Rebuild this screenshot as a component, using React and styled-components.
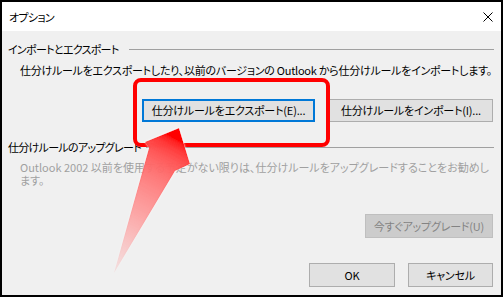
import React from "react";
import styled, { createGlobalStyle } from "styled-components";

const Global = createGlobalStyle`
  html, body { margin: 0; padding: 0; background: #f0f0f0; }
  body {
    font-family: "Noto Sans CJK JP", "Noto Sans", sans-serif;
    font-size: 11px;
    font-feature-settings: "palt";
  }
`;

const Window = styled.div`
  position: relative;
  width: 503px;
  height: 297px;
  box-sizing: border-box;
  border: 2px solid #000;
  display: flex;
  flex-direction: column;
  background: #f0f0f0;
  overflow: hidden;
`;

const TitleBar = styled.div`
  height: 29px;
  flex: none;
  background: #fff;
  display: flex;
  align-items: center;
  justify-content: space-between;
  padding: 0 8px 0 7px;
  color: #000;
`;

const Title = styled.span`
  letter-spacing: -0.7px;
`;

const CloseIcon = styled.svg`
  width: 10px;
  height: 10px;
  display: block;
`;

const Body = styled.div`
  flex: 1;
  display: flex;
  flex-direction: column;
  padding: 0 8px 0 6px;
`;

const GroupHeader = styled.div`
  display: flex;
  align-items: center;
  height: 16px;
  line-height: 16px;
  margin-top: ${(p) => p.$top}px;
  color: #000;
  white-space: nowrap;
`;

const HeaderLabel = styled.span`
  letter-spacing: -0.7px;
`;

const GroupLine = styled.div`
  flex: 1;
  height: 1px;
  background: #a0a0a0;
  margin-left: ${(p) => p.$gap}px;
  margin-right: -1px;
`;

const Description = styled.div`
  margin: 5px 0 0 12px;
  height: 16px;
  line-height: 16px;
  color: #000;
  white-space: nowrap;
  letter-spacing: -0.25px;
`;

const DisabledText = styled.div`
  margin: 6px 0 0 12px;
  color: #a0a0a0;
  white-space: nowrap;
  letter-spacing: 0px;
`;

const DisabledLine = styled.div`
  height: 13px;
  line-height: 13px;
`;

const ButtonRow = styled.div`
  display: flex;
  justify-content: flex-end;
  gap: ${(p) => p.$gap}px;
  margin-top: ${(p) => p.$top}px;
`;

const Button = styled.button`
  font: inherit;
  font-feature-settings: "palt";
  width: ${(p) => p.$w}px;
  height: ${(p) => p.$h}px;
  box-sizing: border-box;
  padding: 0;
  margin: 0;
  background: ${(p) => (p.$disabled ? "#cccccc" : "#e1e1e1")};
  border: ${(p) =>
    p.$focused ? "2px solid #0078d7" : p.$disabled ? "1px solid #bfbfbf" : "1px solid #adadad"};
  color: ${(p) => (p.$disabled ? "#838383" : "#000")};
  font-size: 11px;
  letter-spacing: -0.2px;
  line-height: 1;
  display: flex;
  align-items: center;
  justify-content: center;
  white-space: nowrap;
`;

const Overlay = styled.svg`
  position: absolute;
  left: 0;
  top: 0;
  width: 503px;
  height: 297px;
  pointer-events: none;
`;

export default function App() {
  return (
    <>
      <Global />
      <Window>
        <TitleBar>
          <Title>オプション</Title>
          <CloseIcon viewBox="0 0 10 10">
            <path d="M0.5 0.5 L9.5 9.5 M9.5 0.5 L0.5 9.5" stroke="#000" strokeWidth="1" fill="none" />
          </CloseIcon>
        </TitleBar>
        <Body>
          <GroupHeader $top={10}>
            <HeaderLabel>インポートとエクスポート</HeaderLabel>
            <GroupLine $gap={10} />
          </GroupHeader>
          <Description>
            仕分けルールをエクスポートしたり、以前のバージョンの Outlook から仕分けルールをインポートします。
          </Description>
          <ButtonRow $top={21} $gap={14}>
            <Button $w={173} $h={23} $focused>
              仕分けルールをエクスポート(E)...
            </Button>
            <Button $w={164} $h={23}>
              仕分けルールをインポート(I)...
            </Button>
          </ButtonRow>
          <GroupHeader $top={17}>
            <HeaderLabel>仕分けルールのアップグレード</HeaderLabel>
            <GroupLine $gap={5} />
          </GroupHeader>
          <DisabledText>
            <DisabledLine>
              Outlook 2002 以前を使用する予定がない限りは、仕分けルールをアップグレードすることをお勧めし
            </DisabledLine>
            <DisabledLine>ます。</DisabledLine>
          </DisabledText>
          <ButtonRow $top={27} $gap={0}>
            <Button $w={128} $h={24} $disabled>
              今すぐアップグレード(U)
            </Button>
          </ButtonRow>
          <ButtonRow $top={25} $gap={13}>
            <Button $w={86} $h={24}>OK</Button>
            <Button $w={85} $h={24}>キャンセル</Button>
          </ButtonRow>
        </Body>
        <Overlay viewBox="0 0 503 297">
          <defs>
            <linearGradient id="arrowGrad" x1="112" y1="271" x2="180" y2="140" gradientUnits="userSpaceOnUse">
              <stop offset="0" stopColor="#ff0000" stopOpacity="0.12" />
              <stop offset="0.45" stopColor="#ff2a2a" stopOpacity="0.6" />
              <stop offset="1" stopColor="#ff0000" stopOpacity="1" />
            </linearGradient>
            <filter id="glow" x="-20%" y="-20%" width="140%" height="140%">
              <feDropShadow dx="0" dy="0" stdDeviation="1" floodColor="#ffffff" floodOpacity="0.9" />
            </filter>
          </defs>
          <rect x="133" y="78" width="193" height="65" rx="6" ry="6" fill="none" stroke="#ff0000" strokeWidth="4" />
          <path
            d="M177 126 L188 162 L173 169 L112 271 L147 146 L143 140 Z"
            fill="url(#arrowGrad)"
            filter="url(#glow)"
          />
        </Overlay>
      </Window>
    </>
  );
}
